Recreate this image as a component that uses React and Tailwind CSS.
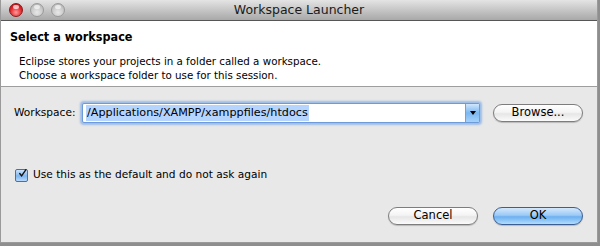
const font = { fontFamily: '"Lucida Grande", "DejaVu Sans", sans-serif' };
const boldFont = { fontFamily: '"DejaVu Sans Condensed", "DejaVu Sans", sans-serif' };

function Light({ red }) {
  return red ? (
    <div className="w-[14px] h-[14px] rounded-full border border-[#8a1a1a] bg-[radial-gradient(circle_at_50%_70%,#ff9a9a_0%,#e3262b_55%,#a8070e_100%)] relative">
      <div className="absolute left-[3px] top-[1px] w-[6px] h-[4px] rounded-full bg-white/70" />
    </div>
  ) : (
    <div className="w-[14px] h-[14px] rounded-full border border-[#9a9a9a] bg-[radial-gradient(circle_at_50%_70%,#e8e8e8_0%,#c6c6c6_60%,#a8a8a8_100%)] relative">
      <div className="absolute left-[3px] top-[1px] w-[6px] h-[4px] rounded-full bg-white/60" />
    </div>
  );
}

function AquaButton({ children, primary, className = '' }) {
  const look = primary
    ? 'border-[#3b5f95] bg-[linear-gradient(#d4e8fc_0%,#9ccaf6_45%,#6cb0f0_55%,#b2dcfd_100%)]'
    : 'border-[#7d7d7d] bg-[linear-gradient(#ffffff_0%,#f4f4f4_45%,#e6e6e6_55%,#fbfbfb_100%)]';
  return (
    <button className={`w-[90px] h-[18px] rounded-full border text-[11.5px] leading-none text-black flex items-center justify-center shadow-[0_1px_1px_rgba(0,0,0,0.2)] ${look} ${className}`}>
      {children}
    </button>
  );
}

export default function App() {
  return (
    <div className="w-[600px] h-[246px] overflow-hidden bg-[#8e8e8e]" style={font}>
      <div className="w-[598px] h-[243px] flex flex-col bg-[#e8e8e8] border-l border-r border-b border-[#9a9a9a]">
        {/* title bar */}
        <div className="h-[21px] flex items-center relative border-b border-[#565656] bg-[linear-gradient(#e4e4e4,#a8a8a8)]">
          <div className="flex gap-[7px] pl-[8px]">
            <Light red />
            <Light />
            <Light />
          </div>
          <div className="absolute inset-0 flex items-center justify-center text-[12.5px] text-[#1a1a1a]">
            Workspace Launcher
          </div>
        </div>

        {/* header */}
        <div className="h-[66px] bg-white border-b border-[#9e9e9e] pl-[9px] pt-[8px]">
          <div className="text-[12.5px] font-bold text-black leading-[16px]" style={boldFont}>Select a workspace</div>
          <div className="pl-[9px] pt-[9px] text-[10.3px] leading-[14px] text-black">
            <div>Eclipse stores your projects in a folder called a workspace.</div>
            <div>Choose a workspace folder to use for this session.</div>
          </div>
        </div>

        {/* body */}
        <div className="flex-1 flex flex-col text-[10.6px] text-black">
          <div className="flex items-center mt-[16px] h-[20px]">
            <span className="pl-[13px] w-[81px]">Workspace:</span>
            <div className="w-[398px] h-[20px] flex rounded-[2px] border border-[#6d9ad8] shadow-[0_0_2px_2px_rgba(110,160,230,0.6)] bg-white">
              <div className="flex-1 flex items-center pl-[3px]">
                <span className="bg-[#b5d5fe] px-[1px] text-[11.2px] leading-[16px]">/Applications/XAMPP/xamppfiles/htdocs</span>
              </div>
              <div className="w-[14px] border-l border-[#7c9fd0] bg-[linear-gradient(#d0e6fc,#7bb7f2_50%,#a6d2fb)] flex items-center justify-center">
                <div className="w-0 h-0 border-l-[3px] border-r-[3px] border-t-[4px] border-l-transparent border-r-transparent border-t-black" />
              </div>
            </div>
            <AquaButton className="ml-[13px]">Browse...</AquaButton>
          </div>

          <div className="flex items-center mt-[45px] pl-[14px] h-[14px]">
            <div className="w-[13px] h-[13px] rounded-[2px] border border-[#4c6f9f] bg-[linear-gradient(#cde3fb,#7fb6ee_55%,#b8dafd)] flex items-center justify-center">
              <svg width="13" height="13" viewBox="0 0 13 13" className="-mt-[3px] ml-[2px]">
                <path d="M2.5 6.5 L5.2 10 L11.5 1" fill="none" stroke="#111" strokeWidth="2" strokeLinecap="round" />
              </svg>
            </div>
            <span className="pl-[5px]">Use this as the default and do not ask again</span>
          </div>

          <div className="flex justify-end gap-[15px] mt-[25px] pr-[14px]">
            <AquaButton>Cancel</AquaButton>
            <AquaButton primary>OK</AquaButton>
          </div>
        </div>
      </div>
    </div>
  );
}
